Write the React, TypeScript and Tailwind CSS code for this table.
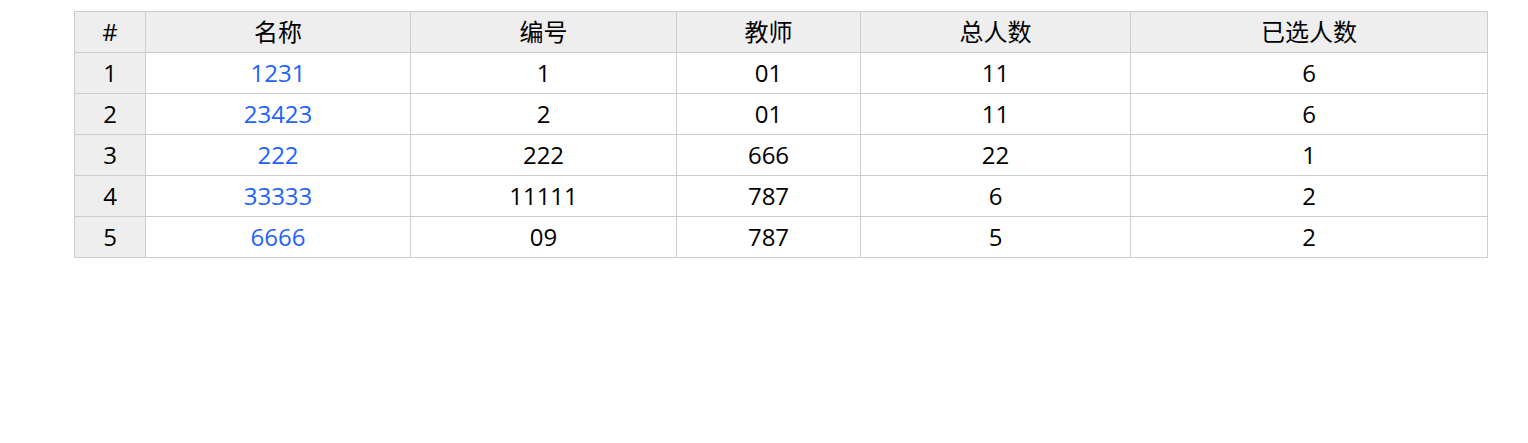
const headers = ["#", "名称", "编号", "教师", "总人数", "已选人数"]
const widths = ["w-[71px]", "w-[265px]", "w-[266px]", "w-[184px]", "w-[270px]", "w-[357px]"]

const rows = [
    { name: "1231", code: "1", teacher: "01", total: "11", chosen: "6" },
    { name: "23423", code: "2", teacher: "01", total: "11", chosen: "6" },
    { name: "222", code: "222", teacher: "666", total: "22", chosen: "1" },
    { name: "33333", code: "11111", teacher: "787", total: "6", chosen: "2" },
    { name: "6666", code: "09", teacher: "787", total: "5", chosen: "2" },
]

export default function App() {
    return (
        <div className="w-[1528px] h-[443px] bg-white pt-[11px] pl-[74px] font-['Open_Sans','Noto_Sans_CJK_SC',sans-serif] text-[24px] leading-none text-black">
            <table className="border-collapse table-fixed w-[1413px]">
                <thead>
                    <tr>
                        {headers.map((h, i) => (
                            <th key={h} className={`${widths[i]} h-[41px] p-0 font-normal text-center bg-[#eeeeee] border border-[#cccccc]`}>
                                {h}
                            </th>
                        ))}
                    </tr>
                </thead>
                <tbody>
                    {rows.map((r, idx) => (
                        <tr key={idx}>
                            <td className="h-[41px] p-0 text-center bg-[#eeeeee] border border-[#cccccc]">{idx + 1}</td>
                            <td className="p-0 text-center border border-[#cccccc]">
                                <a className="text-[#1f62ff] cursor-pointer">{r.name}</a>
                            </td>
                            <td className="p-0 text-center border border-[#cccccc]">{r.code}</td>
                            <td className="p-0 text-center border border-[#cccccc]">{r.teacher}</td>
                            <td className="p-0 text-center border border-[#cccccc]">{r.total}</td>
                            <td className="p-0 text-center border border-[#cccccc]">{r.chosen}</td>
                        </tr>
                    ))}
                </tbody>
            </table>
        </div>
    )
}
